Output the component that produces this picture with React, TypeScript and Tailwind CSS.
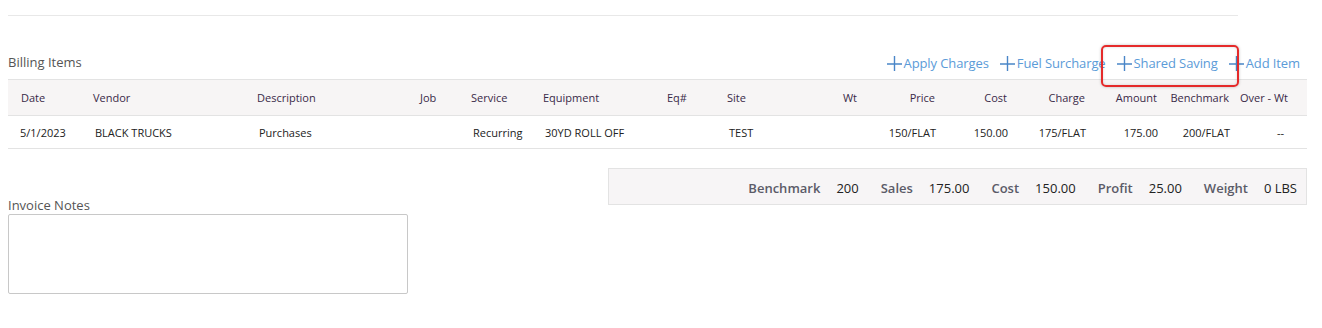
import React from "react";

type Col = { label: string; w: number; align: "left" | "right"; body: string };

const cols: Col[] = [
  { label: "Date", w: 72, align: "left", body: "5/1/2023" },
  { label: "Vendor", w: 164, align: "left", body: "BLACK TRUCKS" },
  { label: "Description", w: 163, align: "left", body: "Purchases" },
  { label: "Job", w: 51, align: "left", body: "" },
  { label: "Service", w: 72, align: "left", body: "Recurring" },
  { label: "Equipment", w: 124, align: "left", body: "30YD ROLL OFF" },
  { label: "Eq#", w: 60, align: "left", body: "" },
  { label: "Site", w: 86, align: "left", body: "TEST" },
  { label: "Wt", w: 65, align: "right", body: "" },
  { label: "Price", w: 78, align: "right", body: "150/FLAT" },
  { label: "Cost", w: 72, align: "right", body: "150.00" },
  { label: "Charge", w: 78, align: "right", body: "175/FLAT" },
  { label: "Amount", w: 72, align: "right", body: "175.00" },
  { label: "Benchmark", w: 72, align: "right", body: "200/FLAT" },
  { label: "Over - Wt", w: 59, align: "right", body: "--" },
];

const gridCols =
  "grid grid-cols-[72px_164px_163px_51px_72px_124px_60px_86px_65px_78px_72px_78px_72px_72px_59px_11px]";

function Plus() {
  return (
    <svg width="15" height="15" viewBox="0 0 15 15" className="shrink-0">
      <path d="M7.5 0V15M0 8H15" stroke="#4a86c8" strokeWidth="1.4" fill="none" />
    </svg>
  );
}

function Action({ label, highlight }: { label: string; highlight?: boolean }) {
  return (
    <span className="relative flex items-center gap-[2px] text-[13px] leading-[18px] tracking-[-0.1px] text-[#5b9bd8] cursor-pointer">
      <Plus />
      <span>{label}</span>
      {highlight && (
        <span className="absolute left-[-16px] right-[-21px] top-[-9px] bottom-[-15px] z-10 rounded-[5px] border-2 border-[#e52a2a] shadow-[0_0_3px_rgba(0,0,0,0.25),inset_0_0_3px_rgba(0,0,0,0.15)]" />
      )}
    </span>
  );
}

function Stat({ label, value }: { label: string; value: string }) {
  return (
    <div className="flex items-center gap-[16px]">
      <span className="font-semibold text-[#5b5b68]">{label}</span>
      <span className="text-[#222]">{value}</span>
    </div>
  );
}

function bodyClass(c: Col) {
  if (c.label === "Over - Wt") return "pr-[12px] text-right whitespace-nowrap";
  if (c.label === "Date") return "pl-[12px] whitespace-nowrap";
  if (c.align === "left") return "pl-[15px] whitespace-nowrap";
  return "pr-[7px] text-right whitespace-nowrap";
}

export default function App() {
  return (
    <div
      className="w-[1322px] h-[328px] bg-white px-[8px] pt-[15px]"
      style={{ fontFamily: '"Open Sans", "Liberation Sans", sans-serif' }}
    >
      <div className="h-px w-[1230px] bg-[#e8e8e8]" />

      <div className="mt-[37px] w-[1299px] flex items-start justify-between pr-[7px]">
        <span className="text-[13px] leading-[18px] text-[#555]">Billing Items</span>
        <div className="pt-[1px] flex items-center gap-[11px]">
          <Action label="Apply Charges" />
          <Action label="Fuel Surcharge" />
          <Action label="Shared Saving" highlight />
          <Action label="Add Item" />
        </div>
      </div>

      <div className="mt-[7px] w-[1299px] text-[11px]">
        <div className={`${gridCols} h-[37px] pt-[2px] items-center bg-[#f7f5f5] border-y border-[#e3e3e3] text-[#3a2a48]`}>
          {cols.map((c) => (
            <div
              key={c.label}
              className={c.align === "left" ? "pl-[13px] whitespace-nowrap" : "pr-[8px] text-right whitespace-nowrap"}
            >
              {c.label}
            </div>
          ))}
          <div />
        </div>
        <div className={`${gridCols} h-[33px] pt-[2px] items-center border-b border-[#e3e3e3] text-[#222]`}>
          {cols.map((c) => (
            <div key={c.label} className={bodyClass(c)}>
              {c.body}
            </div>
          ))}
          <div />
        </div>
      </div>

      <div className="mt-[19px] w-[1299px] flex justify-end">
        <div className="w-[699px] h-[37px] pt-[4px] flex items-center justify-end gap-[22px] pr-[9px] bg-[#f7f5f6] border border-[#e3e3e3] text-[13px]">
          <Stat label="Benchmark" value="200" />
          <Stat label="Sales" value="175.00" />
          <Stat label="Cost" value="150.00" />
          <Stat label="Profit" value="25.00" />
          <Stat label="Weight" value="0 LBS" />
        </div>
      </div>

      <div className="-mt-[9px] w-[400px]">
        <div className="text-[13px] leading-[18px] text-[#555]">Invoice Notes</div>
        <textarea className="block w-[400px] h-[80px] resize-none rounded-[2px] border border-[#c8c8c8] bg-white outline-none" />
      </div>
    </div>
  );
}
